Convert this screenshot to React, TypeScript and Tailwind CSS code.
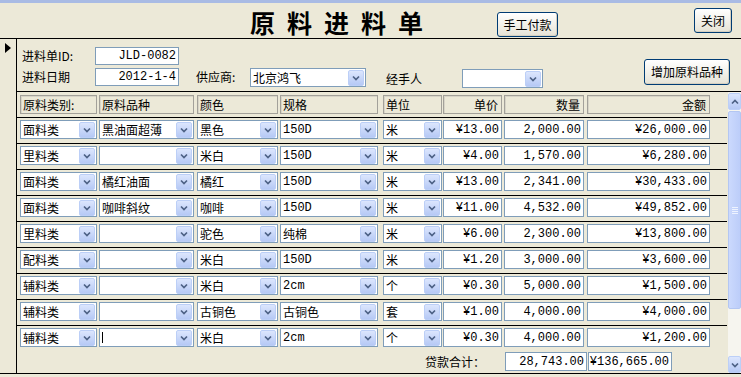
import React from "react";

type Row = {
  kind: string;
  item: string;
  color: string;
  spec: string;
  unit: string;
  price: string;
  qty: string;
  amount: string;
  caret?: boolean;
};

const rows: Row[] = [
  { kind: "面料类", item: "黑油面超薄", color: "黑色", spec: "150D", unit: "米", price: "¥13.00", qty: "2,000.00", amount: "¥26,000.00" },
  { kind: "里料类", item: "", color: "米白", spec: "150D", unit: "米", price: "¥4.00", qty: "1,570.00", amount: "¥6,280.00" },
  { kind: "面料类", item: "橘红油面", color: "橘红", spec: "150D", unit: "米", price: "¥13.00", qty: "2,341.00", amount: "¥30,433.00" },
  { kind: "面料类", item: "咖啡斜纹", color: "咖啡", spec: "150D", unit: "米", price: "¥11.00", qty: "4,532.00", amount: "¥49,852.00" },
  { kind: "里料类", item: "", color: "驼色", spec: "纯棉", unit: "米", price: "¥6.00", qty: "2,300.00", amount: "¥13,800.00" },
  { kind: "配料类", item: "", color: "米白", spec: "150D", unit: "米", price: "¥1.20", qty: "3,000.00", amount: "¥3,600.00" },
  { kind: "辅料类", item: "", color: "米白", spec: "2cm", unit: "个", price: "¥0.30", qty: "5,000.00", amount: "¥1,500.00" },
  { kind: "辅料类", item: "", color: "古铜色", spec: "古铜色", unit: "套", price: "¥1.00", qty: "4,000.00", amount: "¥4,000.00" },
  { kind: "辅料类", item: "", color: "米白", spec: "2cm", unit: "个", price: "¥0.30", qty: "4,000.00", amount: "¥1,200.00", caret: true },
];

const cjk = "font-['SimSun','Noto_Sans_CJK_SC',sans-serif]";
const mono = "font-['Liberation_Mono','Noto_Sans_CJK_SC',monospace]";

function Chevron({ up }: { up?: boolean }) {
  return (
    <svg width="8" height="6" viewBox="0 0 8 6">
      <path d={up ? "M1 4.5 L4 1.5 L7 4.5" : "M1 1.5 L4 4.5 L7 1.5"} stroke="#4d6185" strokeWidth="1.7" fill="none" />
    </svg>
  );
}

function DropBtn() {
  return (
    <span className="w-[16px] h-[16px] mr-[1px] shrink-0 flex items-center justify-center rounded-[2px] border border-[#bccff7] bg-linear-to-b from-[#dce6fd] to-[#b6c9f5]">
      <Chevron />
    </span>
  );
}

function Combo({ text, w, ml, latin }: { text: string; w: string; ml: string; latin?: boolean }) {
  return (
    <div className={`${w} ${ml} h-[19px] bg-white border border-[#7f9db9] flex items-center`}>
      <span className={`flex-1 min-w-0 pl-[2px] text-[12px] leading-[16px] whitespace-nowrap ${latin ? mono : ""}`}>{text}</span>
      <DropBtn />
    </div>
  );
}

function NumBox({ text, w, ml }: { text: string; w: string; ml: string }) {
  return (
    <div className={`${w} ${ml} h-[19px] bg-white border border-[#7f9db9] flex items-center justify-end pr-[2px] text-[12px] leading-[16px] ${mono}`}>
      {text}
    </div>
  );
}

function HeadCell({ text, w, ml, right }: { text: string; w: string; ml: string; right?: boolean }) {
  return (
    <div className={`${w} ${ml} h-[19px] border border-[#a3a19a] shadow-[inset_1px_1px_0_#d8d5c8] flex items-center text-[12px] leading-[16px] ${right ? "justify-end pr-[3px]" : "pl-[2px]"}`}>
      {text}
    </div>
  );
}

function XpButton({ text, cls }: { text: string; cls: string }) {
  return (
    <div className={`${cls} flex items-center justify-center rounded-[3px] border border-[#003c74] bg-linear-to-b from-[#ffffff] to-[#e6e3d6] text-[12px] leading-[16px] shadow-[inset_-1px_-1px_0_#d6d0c0]`}>
      {text}
    </div>
  );
}

function ScrollBar() {
  return (
    <div className="w-[14px] h-full flex flex-col bg-[#f6f5ef] border-l border-[#ece9d8]">
      <div className="h-[17px] mt-[1px] flex items-center justify-center rounded-[2px] border border-[#bccff7] bg-linear-to-b from-[#dce6fd] to-[#b6c9f5]">
        <Chevron up />
      </div>
      <div className="h-[198px] mt-[1px] rounded-[2px] border border-[#b3c6f2] bg-linear-to-r from-[#cbd9fd] to-[#bccdf9] flex flex-col items-center justify-center gap-[1px]">
        <span className="w-[6px] h-[1px] bg-[#eef3ff]" />
        <span className="w-[6px] h-[1px] bg-[#eef3ff]" />
        <span className="w-[6px] h-[1px] bg-[#eef3ff]" />
        <span className="w-[6px] h-[1px] bg-[#eef3ff]" />
      </div>
      <div className="flex-1" />
      <div className="h-[17px] flex items-center justify-center rounded-[2px] border border-[#bccff7] bg-linear-to-b from-[#dce6fd] to-[#b6c9f5]">
        <Chevron />
      </div>
    </div>
  );
}

export default function App() {
  return (
    <div className={`w-[741px] h-[377px] bg-[#ece9d8] overflow-hidden flex flex-col text-black ${cjk}`}>
      <div className="h-[3px] bg-[#a9bbe4]" />

      {/* title bar of the form */}
      <div className="h-[35px] flex items-start">
        <div className="ml-[250px] mt-[5px] w-[180px] text-[25px] font-bold leading-[28px] tracking-[12px] whitespace-nowrap font-['Noto_Sans_CJK_SC',serif]">
          原料进料单
        </div>
        <XpButton text="手工付款" cls="ml-[67px] mt-[9px] w-[61px] h-[25px]" />
        <XpButton text="关闭" cls="ml-[136px] mt-[5px] w-[38px] h-[25px]" />
      </div>

      <div className="h-[336px] flex border-t border-b border-black">
        {/* record selector */}
        <div className="w-[17px] border-r border-black pl-[5px] pt-[4px]">
          <svg width="6" height="10" viewBox="0 0 6 10">
            <path d="M0 0 L6 5 L0 10 Z" fill="#000" />
          </svg>
        </div>

        <div className="flex-1 flex flex-col">
          {/* form header */}
          <div className="h-[53px] border-b border-black flex flex-col text-[12px]">
            <div className="mt-[8px] h-[18px] flex items-center">
              <span className="ml-[5px] w-[73px] leading-[18px]">进料单ID:</span>
              <div className={`w-[84px] h-[18px] bg-white border border-[#7f9db9] flex items-center justify-end pr-[2px] ${mono} leading-[16px]`}>JLD-0082</div>
            </div>
            <div className="mt-[3px] h-[18px] flex items-start">
              <span className="ml-[5px] w-[73px] leading-[18px]">进料日期</span>
              <div className={`w-[84px] h-[18px] bg-white border border-[#7f9db9] flex items-center justify-end pr-[2px] ${mono} leading-[16px]`}>2012-1-4</div>
              <span className="ml-[17px] w-[54px] leading-[18px]">供应商:</span>
              <Combo text="北京鸿飞" w="w-[116px]" ml="ml-0" />
              <span className="ml-[20px] w-[76px] mt-[2px] leading-[18px]">经手人</span>
              <div className="mt-[1px]">
                <Combo text="" w="w-[81px]" ml="ml-0" />
              </div>
              <XpButton text="增加原料品种" cls="ml-[101px] -mt-[9px] w-[86px] h-[26px]" />
            </div>
          </div>

          {/* detail + footer */}
          <div className="flex-1 flex">
            <div className="w-[710px] flex flex-col">
              <div className="h-[25px] pt-[3px] flex">
                <HeadCell text="原料类别:" w="w-[77px]" ml="ml-[3px]" />
                <HeadCell text="原料品种" w="w-[95px]" ml="ml-[2px]" />
                <HeadCell text="颜色" w="w-[81px]" ml="ml-[3px]" />
                <HeadCell text="规格" w="w-[98px]" ml="ml-[2px]" />
                <HeadCell text="单位" w="w-[59px]" ml="ml-[5px]" />
                <HeadCell text="单价" w="w-[59px]" ml="ml-[1px]" right />
                <HeadCell text="数量" w="w-[80px]" ml="ml-[2px]" right />
                <HeadCell text="金额" w="w-[123px]" ml="ml-[3px]" right />
              </div>

              {rows.map((r, i) => (
                <div key={i} className="h-[26px] border-t border-black pt-[2px] flex items-start">
                  <Combo text={r.kind} w="w-[77px]" ml="ml-[3px]" />
                  <div className="w-[95px] ml-[2px] h-[19px] bg-white border border-[#7f9db9] flex items-center">
                    <span className="flex-1 min-w-0 pl-[2px] text-[12px] leading-[16px] whitespace-nowrap flex items-center">
                      {r.caret ? <span className="w-[1px] h-[11px] bg-black" /> : r.item}
                    </span>
                    <DropBtn />
                  </div>
                  <Combo text={r.color} w="w-[81px]" ml="ml-[3px]" />
                  <Combo text={r.spec} w="w-[98px]" ml="ml-[2px]" latin={/^[0-9]/.test(r.spec)} />
                  <Combo text={r.unit} w="w-[59px]" ml="ml-[5px]" />
                  <NumBox text={r.price} w="w-[59px]" ml="ml-[1px]" />
                  <NumBox text={r.qty} w="w-[80px]" ml="ml-[2px]" />
                  <NumBox text={r.amount} w="w-[123px]" ml="ml-[3px]" />
                </div>
              ))}

              <div className="flex-1 flex items-start pt-[1px]">
                <span className="ml-[408px] mt-[1px] w-[80px] text-[12px] leading-[18px]">贷款合计：</span>
                <NumBox text="28,743.00" w="w-[82px]" ml="ml-0" />
                <NumBox text="¥136,665.00" w="w-[84px]" ml="ml-[1px]" />
              </div>
            </div>
            <ScrollBar />
          </div>
        </div>
      </div>
    </div>
  );
}
